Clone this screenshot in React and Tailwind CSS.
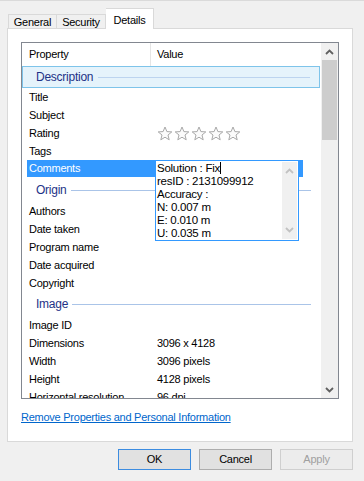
import React from "react";

const Chevron = ({ up, color = "#606060" }) => (
  <svg width="9" height="6" viewBox="0 0 9 6">
    <path
      d={up ? "M1 5 L4.5 1.5 L8 5" : "M1 1 L4.5 4.5 L8 1"}
      fill="none"
      stroke={color}
      strokeWidth="1.8"
    />
  </svg>
);

const Star = () => (
  <svg width="16" height="15" viewBox="0 0 16 15">
    <path
      d="M8 1 L9.9 5.6 L14.8 5.9 L11 9 L12.2 13.8 L8 11.2 L3.8 13.8 L5 9 L1.2 5.9 L6.1 5.6 Z"
      fill="#fbfbfb"
      stroke="#a9a9a9"
      strokeWidth="1"
      strokeLinejoin="round"
    />
  </svg>
);

const Row = ({ name, value, children }) => (
  <div className="h-[18px] flex items-center">
    <div className="w-[128px] pl-[7px] whitespace-nowrap">{name}</div>
    <div className="pl-[7px] whitespace-nowrap">{children || value}</div>
  </div>
);

const Group = ({ title }) => (
  <div className="h-[24px] flex items-center pl-[14px] pr-[10px]">
    <span className="text-[#1e3287] text-[12px]">{title}</span>
    <div className="flex-1 h-px bg-[#aac4e8] ml-[4px]"></div>
  </div>
);

const App = () => {
  return (
    <div className="w-[364px] h-[481px] bg-[#f0f0f0] border-t border-[#dadada] font-['Liberation_Sans',sans-serif] text-[11px] tracking-[-0.25px] text-black flex flex-col">
      {/* tabs */}
      <div className="h-[27px] flex items-end pl-[8px]">
        <div className="w-[49px] h-[15px] mb-[-1px] border border-b-0 border-[#d9d9d9] bg-[#f0f0f0] flex items-center justify-center">
          General
        </div>
        <div className="w-[49px] h-[15px] mb-[-1px] border border-b-0 border-l-0 border-[#d9d9d9] bg-[#f0f0f0] flex items-center justify-center">
          Security
        </div>
        <div className="w-[48px] h-[21px] mb-[-1px] border border-b-0 border-l-0 border-[#d9d9d9] bg-white flex items-start pt-[3px] justify-center relative z-10">
          Details
        </div>
      </div>

      {/* panel */}
      <div className="ml-[7px] w-[346px] h-[414px] bg-white border border-[#d9d9d9] pl-[13px] pt-[13px]">
        <div className="w-[318px] h-[357px] border border-[#828790] flex">
          <div className="w-[299px] relative overflow-hidden">
            {/* header */}
            <div className="h-[23px] flex bg-white">
              <div className="w-[128px] pl-[7px] flex items-center">Property</div>
              <div className="w-px bg-[#e5e5e5]"></div>
              <div className="pl-[6px] flex items-center">Value</div>
            </div>

            {/* Description */}
            <div className="h-[22px] w-[298px] border border-[#7ec4ea] bg-[#e5f3fb] flex items-center pl-[13px] pr-[9px]">
              <span className="text-[#1e3287] text-[12px]">Description</span>
              <div className="flex-1 h-px bg-[#bcd4ef] ml-[5px]"></div>
            </div>
            <Row name="Title" />
            <Row name="Subject" />
            <Row name="Rating">
              <div className="flex gap-px">
                <Star />
                <Star />
                <Star />
                <Star />
                <Star />
              </div>
            </Row>
            <Row name="Tags" />
            <div className="h-[18px] flex items-start">
              <div className="ml-[5px] w-[276px] h-[17px] bg-[#3399ff] text-white pl-[2px] flex items-center">
                Comments
              </div>
            </div>

            <Group title="Origin" />
            <Row name="Authors" />
            <Row name="Date taken" />
            <Row name="Program name" />
            <Row name="Date acquired" />
            <Row name="Copyright" />

            <Group title="Image" />
            <Row name="Image ID" />
            <Row name="Dimensions" value="3096 x 4128" />
            <Row name="Width" value="3096 pixels" />
            <Row name="Height" value="4128 pixels" />
            <Row name="Horizontal resolution" value="96 dpi" />

            {/* comments editor */}
            <div className="absolute left-[133px] top-[117px] w-[144px] h-[81px] bg-white border border-[#3399ff] flex">
              <div className="flex-1 pl-[1px] pt-[1px] leading-[13px] text-[11.5px] whitespace-nowrap">
                <div>
                  Solution : Fix<span className="inline-block w-px h-[12px] bg-black align-[-2px]"></span>
                </div>
                <div>resID : 2131099912</div>
                <div>Accuracy :</div>
                <div>N: 0.007 m</div>
                <div>E: 0.010 m</div>
                <div>U: 0.035 m</div>
              </div>
              <div className="w-[15px] my-px mr-px bg-[#f0f0f0] flex flex-col items-center justify-between py-[6px]">
                <Chevron up color="#c2c2c2" />
                <Chevron color="#c2c2c2" />
              </div>
            </div>
          </div>

          {/* scrollbar */}
          <div className="w-[17px] bg-[#f0f0f0] flex flex-col">
            <div className="h-[17px] flex items-center justify-center">
              <Chevron up />
            </div>
            <div className="h-[80px] mx-px bg-[#cdcdcd]"></div>
            <div className="flex-1"></div>
            <div className="h-[17px] flex items-center justify-center">
              <Chevron />
            </div>
          </div>
        </div>

        <div className="mt-[12px] leading-[13px]">
          <span className="text-[#0066cc] underline">Remove Properties and Personal Information</span>
        </div>
      </div>

      {/* buttons */}
      <div className="flex justify-end gap-[8px] mt-[7px] pr-[11px]">
        <div className="w-[73px] h-[21px] border border-[#3c8ce0] bg-[#e1e1e1] flex items-center justify-center">
          OK
        </div>
        <div className="w-[73px] h-[21px] border border-[#adadad] bg-[#e1e1e1] flex items-center justify-center">
          Cancel
        </div>
        <div className="w-[73px] h-[21px] border border-[#cfcfcf] bg-[#ececec] text-[#a0a0a0] flex items-center justify-center">
          Apply
        </div>
      </div>
    </div>
  );
};

export default App;
